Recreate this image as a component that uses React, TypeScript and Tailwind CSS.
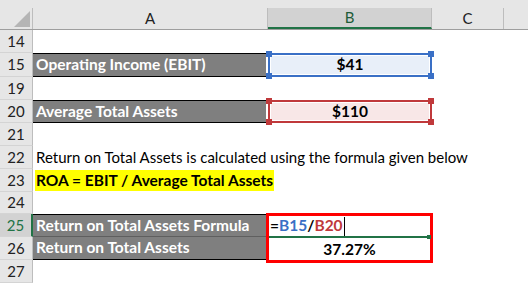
import type { ReactNode } from 'react';

const font = "font-['Lato','Liberation_Sans',sans-serif]";

function RowHead({ n, h, active }: { n: number; h: string; active?: boolean }) {
  return (
    <div
      className={`${h} flex w-[33px] shrink-0 items-center justify-center border-b border-r text-[15px] ${
        active
          ? 'border-b-[#d4d4d4] border-r-2 border-r-[#217346] bg-[#d2d2d2] text-[#217346]'
          : 'border-b-[#d4d4d4] border-r-[#bdbdbd] bg-[#e6e6e6] text-[#222]'
      }`}
    >
      {n}
    </div>
  );
}

function Handles({ color }: { color: string }) {
  return (
    <>
      <span className={`absolute -left-[4px] -top-[4px] size-[6px] ${color}`} />
      <span className={`absolute -right-[4px] -top-[4px] size-[6px] ${color}`} />
      <span className={`absolute -bottom-[4px] -left-[4px] size-[6px] ${color}`} />
      <span className={`absolute -bottom-[4px] -right-[4px] size-[6px] ${color}`} />
    </>
  );
}

function Row({ n, h, children }: { n: number; h: string; children?: ReactNode }) {
  return (
    <div className={`flex ${h}`}>
      <RowHead n={n} h={h} />
      {children}
    </div>
  );
}

function GrayCell({ text, h, top, bottom }: { text: string; h: string; top?: boolean; bottom?: boolean }) {
  return (
    <div
      className={`${h} flex w-[233px] shrink-0 items-center bg-[#7f7f7f] pl-[3px] text-[15.5px] font-bold whitespace-nowrap text-white ${
        top ? 'border-t border-t-black' : ''
      } ${bottom ? 'border-b border-b-black' : ''}`}
    >
      {text}
    </div>
  );
}

export default function App() {
  return (
    <div className={`h-[283px] w-[528px] overflow-hidden bg-white ${font}`}>
      {/* column headers */}
      <div className="h-[8px] bg-[#e6e6e6]" />
      <div className="flex h-[22px] border-b border-[#9e9e9e] bg-[#e6e6e6] text-[15px] text-[#222]">
        <div className="relative w-[33px] shrink-0 border-r border-[#bdbdbd]">
          <svg className="absolute right-[2px] bottom-[2px]" width="16" height="16" viewBox="0 0 16 16">
            <polygon points="16,0 16,16 0,16" fill="#b5b5b5" />
          </svg>
        </div>
        <div className="flex w-[235px] shrink-0 items-center justify-center border-r border-[#bdbdbd]">A</div>
        <div className="flex w-[164px] shrink-0 items-center justify-center border-b-2 border-r border-b-[#217346] border-r-[#bdbdbd] bg-[#d2d2d2] text-[#1d5c38]">
          B
        </div>
        <div className="flex w-[72px] shrink-0 items-center justify-center border-r border-[#bdbdbd]">C</div>
        <div className="flex-1" />
      </div>

      <Row n={14} h="h-[23px]" />

      <Row n={15} h="h-[24px]">
        <GrayCell text="Operating Income (EBIT)" h="h-[24px]" top bottom />
        <div className="w-[2px] shrink-0" />
        <div className="relative h-[24px] w-[164px] shrink-0 border-2 border-[#3a70c6]">
          <div className="flex h-full items-center justify-center border border-white bg-[#e8eff9] text-[15.5px] font-bold text-black">
            $41
          </div>
          <Handles color="bg-[#3a70c6]" />
        </div>
      </Row>

      <Row n={19} h="h-[23px]" />

      <Row n={20} h="h-[23px]">
        <GrayCell text="Average Total Assets" h="h-[23px]" top bottom />
        <div className="w-[2px] shrink-0" />
        <div className="relative h-[23px] w-[164px] shrink-0 border-2 border-[#c0393b]">
          <div className="flex h-full items-center justify-center border border-white bg-[#f8e7e7] text-[15.5px] font-bold text-black">
            $110
          </div>
          <Handles color="bg-[#c0393b]" />
        </div>
      </Row>

      <Row n={21} h="h-[23px]" />

      <Row n={22} h="h-[23px]">
        <div className="flex items-center pl-[3px] text-[15px] whitespace-nowrap text-black">
          Return on Total Assets is calculated using the formula given below
        </div>
      </Row>

      <Row n={23} h="h-[23px]">
        <div className="flex items-center pl-[2px]">
          <span className="flex h-[21px] items-center bg-[#ffff00] px-[1px] text-[15.5px] font-bold whitespace-nowrap text-black">
            ROA = EBIT / Average Total Assets
          </span>
        </div>
      </Row>

      <Row n={24} h="h-[22px]" />

      {/* rows 25-26 */}
      <div className="flex h-[46px]">
        <div className="flex w-[33px] shrink-0 flex-col">
          <RowHead n={25} h="h-[23px]" active />
          <RowHead n={26} h="h-[23px]" />
        </div>
        <div className="flex w-[233px] shrink-0 flex-col border-y border-black bg-[#7f7f7f]">
          <div className="flex h-[22px] items-center border-b border-[#5f5f5f] pl-[3px] text-[15.5px] font-bold whitespace-nowrap text-white">
            Return on Total Assets Formula
          </div>
          <div className="flex h-[22px] items-center pl-[3px] text-[15.5px] font-bold whitespace-nowrap text-white">
            Return on Total Assets
          </div>
        </div>
        <div className="-mt-[1px] flex h-[50px] w-[167px] shrink-0 flex-col border-[3px] border-[#ff0000]">
          <div className="relative flex h-[22px] items-center border-b-2 border-[#217346] pl-[1px] text-[15.5px] font-bold">
            <span className="text-black">=</span>
            <span className="text-[#3a70c6]">B15</span>
            <span className="text-black">/</span>
            <span className="text-[#c0393b]">B20</span>
            <span className="ml-[1px] h-[19px] w-px bg-black" />
            <span className="absolute -right-[1px] -bottom-[3px] size-[4px] bg-[#217346]" />
          </div>
          <div className="flex flex-1 items-center justify-center text-[15.5px] font-bold text-black">37.27%</div>
        </div>
      </div>

      <Row n={27} h="h-[23px]" />
    </div>
  );
}
